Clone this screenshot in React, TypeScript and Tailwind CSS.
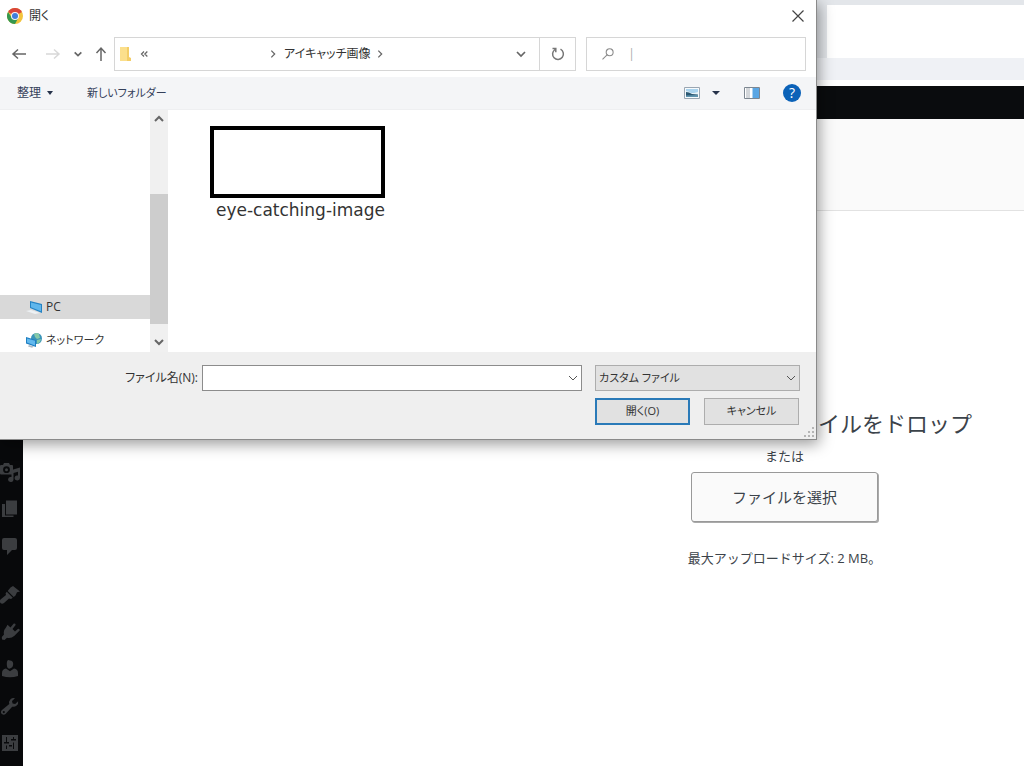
import type { ReactNode } from "react";

type IconProps = { children: ReactNode };

function MenuIcon({ children }: IconProps) {
  return (
    <svg viewBox="0 0 20 20" className="h-5 w-5" fill="currentColor" aria-hidden="true">
      {children}
    </svg>
  );
}

const contentMenu = [
  {
    label: "メディア",
    icon: (
      <MenuIcon>
        <path
          fillRule="evenodd"
          d="M1 3h2l1-2h5l1 2h2q1 0 1 1v7.500q0 1-1 1H1q-1 0-1-1V4q0-1 1-1zm5.500 1.300a3.400 3.400 0 1 0 0 6.800 3.400 3.400 0 0 0 0-6.800zm0 1.900a1.500 1.500 0 1 1 0 3 1.500 1.500 0 0 1 0-3z"
        />
        <path d="M11.500 8l8.500-2.500V16a2.700 2.500 0 1 1-2-2.400V9.800l-4.500 1.200v6.500a2.700 2.500 0 1 1-2-2.400z" />
      </MenuIcon>
    ),
  },
  {
    label: "固定ページ",
    icon: (
      <MenuIcon>
        <path d="M6 1.500h11v14H6z" />
        <path d="M2 5h3v11.500h8.500V18H2z" />
      </MenuIcon>
    ),
  },
  {
    label: "コメント",
    icon: (
      <MenuIcon>
        <path d="M4 2h11q2 0 2 2v8q0 2-2 2h-3l-5 5v-5H4q-2 0-2-2V4q0-2 2-2z" />
      </MenuIcon>
    ),
  },
];

const adminMenu = [
  {
    label: "外観",
    icon: (
      <MenuIcon>
        <path d="M10.500 2.500L13 1l7 5.500-3 .8-1.500 3.200-1.800 1.500-6-6zM6.800 6.800l6 6-1.800 1.200-2-.6-5 4.600q-2 1.500-3.500 0t0-3.500l5.500-4.500-.4-1.800z" />
      </MenuIcon>
    ),
  },
  {
    label: "プラグイン",
    icon: (
      <MenuIcon>
        <path d="M10.500 5.500l3-3.700q.9-.8 1.700 0t0 1.700L12.500 7l2.500 2.500 2.800-2.400q.9-.7 1.600.1t0 1.600L16.200 12l-1.700 1.700q-3.500 3-7.500 2L4.500 18 2 17.500 1.800 15 4 12.500Q3 8.500 6 5.500l1.500-2.700z" />
      </MenuIcon>
    ),
  },
  {
    label: "ユーザー",
    icon: (
      <MenuIcon>
        <path d="M10 1.500q3.200 0 3.200 3.500T10 9.500 6.800 5 10 1.500z" />
        <path d="M6 9.500l4 2.800 4-2.800q4 .8 4 4.500v3q-8 2.500-16 0v-3q0-3.700 4-4.500z" />
      </MenuIcon>
    ),
  },
  {
    label: "ツール",
    icon: (
      <MenuIcon>
        <path
          fillRule="evenodd"
          d="M16.700 9.500q-2 1.800-4.500 1.200L5.500 18q-1.700 1.500-3.600 0t-.2-3.700L9.300 8q-.8-2.500 1-4.500 2-2 4.700-1.300L12 5l.6 2.600 2.600.5 2.900-2.900q.6 2.600-1.400 4.300zM3.800 15a1.100 1.100 0 1 0 0 2.200 1.100 1.100 0 0 0 0-2.200z"
        />
      </MenuIcon>
    ),
  },
  {
    label: "設定",
    icon: (
      <MenuIcon>
        <path
          fillRule="evenodd"
          d="M2 2h16v16H2zM6 4v5H4v1.500h5V9H7V4zm0 8.500V16h1v-3.500zM13 4v2h-2v1.500h5V6h-2V4zm0 5.500V16h1V9.500zM9 12v1.500h3V12z"
        />
      </MenuIcon>
    ),
  },
];

function Chevron({ dir, className }: { dir: "up" | "down" | "right"; className: string }) {
  const d = { up: "M2 7l4-4 4 4", down: "M2 4l4 4 4-4", right: "M4 2l4 4-4 4" }[dir];
  return (
    <svg viewBox="0 0 12 12" className={className} fill="none" stroke="currentColor" aria-hidden="true">
      <path d={d} />
    </svg>
  );
}

function ChromeLogo() {
  return (
    <svg viewBox="0 0 16 16" className="h-4 w-4" aria-hidden="true">
      <circle cx="8" cy="8" r="8" fill="#f3c33c" />
      <path d="M8 8L1.070 4A8 8 0 0 1 14.930 4z" fill="#d9453a" />
      <path d="M1.070 4A8 8 0 0 0 8 16l3.300-6L8 8 4.800 9.700z" fill="#35984f" />
      <circle cx="8" cy="8" r="4" fill="#f4f4f4" />
      <circle cx="8" cy="8" r="3" fill="#3f7edb" />
    </svg>
  );
}

function Arrow({ dir, className }: { dir: "left" | "right" | "up"; className: string }) {
  const d = {
    left: "M15 8H2M7 3.500L2 8l5 4.500",
    right: "M1 8h13M9 3.500L14 8l-5 4.500",
    up: "M8 15V2M3.500 7L8 2l4.500 5",
  }[dir];
  return (
    <svg viewBox="0 0 16 16" className={className} fill="none" stroke="currentColor" strokeWidth="1.500" aria-hidden="true">
      <path d={d} />
    </svg>
  );
}

function FileDialog() {
  return (
    <div
      role="dialog"
      aria-label="開く"
      className="absolute top-0 left-0 right-[207px] flex flex-col border-r border-b border-[#8a8a8a] bg-white text-xs text-[#333] shadow-[2px_4px_14px_rgba(0,0,0,0.4)] [font-feature-settings:'palt']"
    >
      <header className="flex h-[31px] items-center gap-1.5 pr-2.5 pl-[7px]">
        <ChromeLogo />
        <h1 className="flex-1">開く</h1>
        <button aria-label="閉じる" className="flex h-4 w-4 items-center justify-center">
          <svg viewBox="0 0 12 12" className="h-3 w-3" stroke="#444" strokeWidth="1.200" aria-hidden="true">
            <path d="M.5 .5l11 11M11.500 .5l-11 11" />
          </svg>
        </button>
      </header>

      <div className="flex h-[46px] items-center pr-2.5 pl-[11px]">
        <nav aria-label="移動" className="flex w-[103px] items-center text-[#666]">
          <button aria-label="戻る">
            <Arrow dir="left" className="h-4 w-4" />
          </button>
          <button aria-label="進む" className="ml-[18px] text-[#d8d8d8]">
            <Arrow dir="right" className="h-4 w-4" />
          </button>
          <button aria-label="履歴" className="ml-3">
            <Chevron dir="down" className="h-2.5 w-2.5 stroke-2" />
          </button>
          <button aria-label="上へ" className="ml-2.5">
            <Arrow dir="up" className="h-4 w-4" />
          </button>
        </nav>
        <div className="flex h-[34px] flex-1 border border-[#d6d6d6]">
          <div className="flex flex-1 items-center pl-1">
            <svg viewBox="0 0 12 16" className="h-4 w-3" aria-hidden="true">
              <path d="M1 1h9v10l2 1v3H1z" fill="#f3cd67" />
              <path d="M1 1h7v14H1z" fill="#fbdf8c" />
            </svg>
            <button aria-label="前の階層" className="ml-2 text-[#666]">
              <svg viewBox="0 0 12 12" className="h-2.5 w-2.5" fill="none" stroke="currentColor" strokeWidth="1.500" aria-hidden="true">
                <path d="M6 3L3 6l3 3M10 3L7 6l3 3" />
              </svg>
            </button>
            <Chevron dir="right" className="ml-[119px] h-2.5 w-2.5 stroke-[1.5] text-[#666]" />
            <a href="#folder" className="ml-1.5">
              アイキャッチ画像
            </a>
            <Chevron dir="right" className="ml-1 h-2.5 w-2.5 stroke-[1.5] text-[#666]" />
            <button aria-label="以前の場所" className="mr-3 ml-auto text-[#666]">
              <Chevron dir="down" className="h-3 w-3 stroke-[1.7]" />
            </button>
          </div>
          <button aria-label="更新" className="flex w-9 items-center justify-center border-l border-[#d6d6d6] text-[#777]">
            <svg viewBox="0 0 14 14" className="h-3.5 w-3.5" fill="none" stroke="currentColor" strokeWidth="1.500" aria-hidden="true">
              <path d="M9.500 2.200A5.400 5.400 0 1 1 4 2.500M1.500 1.500h3.300v3.700" />
            </svg>
          </button>
        </div>
        <label className="ml-2.5 flex h-[34px] w-[220px] items-center border border-[#d6d6d6] pl-[15px]">
          <svg viewBox="0 0 14 14" className="h-3.5 w-3.5" fill="none" stroke="#8a8a8a" strokeWidth="1.200" aria-hidden="true">
            <circle cx="8.800" cy="5" r="4" />
            <path d="M5.800 8L.6 13.200" />
          </svg>
          <input type="search" aria-label="検索" placeholder="|" className="ml-3.5 w-full min-w-0 bg-transparent outline-none placeholder:text-[#aaa]" />
        </label>
      </div>

      <div className="flex h-[33px] items-center border-b border-[#eeeff1] bg-[#f4f5f7] pr-[15px] pl-[17px] text-[#34405a]">
        <button className="flex items-center gap-1.5">
          整理
          <svg viewBox="0 0 6 4" className="h-1 w-1.5" fill="#26324a" aria-hidden="true">
            <path d="M0 0h6L3 4z" />
          </svg>
        </button>
        <button className="ml-[34px] text-[11px]">新しいフォルダー</button>
        <div className="ml-auto flex items-center">
          <button aria-label="表示方法の変更" className="flex items-center gap-3">
            <svg viewBox="0 0 16 12" className="h-3 w-4" aria-hidden="true">
              <path d="M.5 .5h15v11H.5z" fill="#f6fafd" stroke="#9aa6b2" />
              <path d="M2 2h12v4H2z" fill="#a9d3ee" />
              <path d="M2 4q3 0 6 2.500L14 5v2H2z" fill="#e7f3f8" />
              <path d="M2 5q3 .2 6 2l6 .5V10H2z" fill="#2b5873" />
              <path d="M2 8.500l12-.6V10H2z" fill="#5f94ae" />
            </svg>
            <svg viewBox="0 0 8 4" className="h-1 w-2" fill="#26324a" aria-hidden="true">
              <path d="M0 0h8L4 4z" />
            </svg>
          </button>
          <button aria-label="プレビュー ウィンドウ" className="ml-6">
            <svg viewBox="0 0 16 12" className="h-3 w-4" aria-hidden="true">
              <path d="M.5 .5h15v11H.5z" fill="#fff" stroke="#7d8791" />
              <path d="M5 1v10M3 1v10" stroke="#a6adb5" />
              <path d="M8.500 1H15v10H8.500z" fill="#5aa6e4" />
            </svg>
          </button>
          <button
            aria-label="ヘルプ"
            className="ml-[23px] flex h-[18px] w-[18px] items-center justify-center rounded-full bg-[#0b62b8] text-sm leading-none text-white"
          >
            ?
          </button>
        </div>
      </div>

      <div className="flex h-[242px] bg-white">
        <ul className="flex w-[150px] flex-col justify-end gap-[9px]">
          <li className="flex h-6 items-center gap-1 bg-[#d9d9d9] pl-[26px]">
            <svg viewBox="0 0 16 16" className="h-4 w-4" aria-hidden="true">
              <path d="M0 12l5-1 9 3-5 1z" fill="#edf1f4" />
              <path d="M4 2l12 3v9L4 9z" fill="#2583c4" />
              <path d="M5 3.500l10 2.600v6.200L5 8.300z" fill="#5fb6ec" />
            </svg>
            PC
          </li>
          <li className="flex h-6 items-center gap-1 pl-[26px] text-[11px]">
            <svg viewBox="0 0 16 16" className="h-4 w-4" aria-hidden="true">
              <circle cx="10.500" cy="6.500" r="5.500" fill="#3a94b8" />
              <path d="M8 2q3-2 5 0l1 4-3 1-2-2zM11 8l4-1-1 3-3 2z" fill="#86c9a8" />
              <path d="M0 5l10 3v7L0 11.500z" fill="#1f7fc2" />
              <path d="M1 6.400l8 2.400v4.600L1 10.600z" fill="#62b9ee" />
              <path d="M3 13l5 1.500-2 1.300-4-1.300z" fill="#aebcc6" />
            </svg>
            ネットワーク
          </li>
        </ul>
        <div className="flex w-[18px] flex-col items-center bg-[#f0f0f0] text-[#666]">
          <button aria-label="上へスクロール" className="flex h-5 items-center">
            <Chevron dir="up" className="h-3 w-3 stroke-2" />
          </button>
          <div className="mt-16 h-[130px] w-full bg-[#cdcdcd]" />
          <button aria-label="下へスクロール" className="mt-auto flex h-5 items-center">
            <Chevron dir="down" className="h-3 w-3 stroke-2" />
          </button>
        </div>
        <div className="flex-1 pt-4 pl-[42px]">
          <button className="flex flex-col items-end">
            <span className="h-[72px] w-[175px] border-4 border-black bg-white" />
            <span className="font-['DejaVu_Sans',sans-serif] text-[17px] leading-6">eye-catching-image</span>
          </button>
        </div>
      </div>

      <footer className="relative bg-[#efefef] pt-[13px] pr-4 pb-3.5">
        <div className="flex h-[26px] items-center">
          <label htmlFor="file-name" className="w-[198px] text-right">
            ファイル名(N):
          </label>
          <div className="ml-1 flex h-full flex-1 items-center border border-[#8c8c8c] bg-white pr-0.5">
            <input id="file-name" type="text" className="h-full min-w-0 flex-1 px-1 outline-none" />
            <button aria-label="ファイル名の履歴" className="text-[#555]">
              <Chevron dir="down" className="h-3 w-3" />
            </button>
          </div>
          <div className="ml-[13px] grid h-full w-[205px] items-center">
            <select
              aria-label="ファイルの種類"
              className="col-start-1 row-start-1 h-full appearance-none border border-[#adadad] bg-[#e1e1e1] pl-[3px] text-[11px] outline-none"
            >
              <option>カスタム ファイル</option>
            </select>
            <Chevron dir="down" className="pointer-events-none col-start-1 row-start-1 mr-[3px] h-3 w-3 justify-self-end text-[#555]" />
          </div>
        </div>
        <div className="mt-[7px] flex h-[27px] justify-end gap-3.5 pr-px text-[11px]">
          <button className="w-[95px] border-2 border-[#2a7ab8] bg-[#e1e1e1]">開く(O)</button>
          <button className="w-[95px] border border-[#adadad] bg-[#e1e1e1]">キャンセル</button>
        </div>
        <svg viewBox="0 0 10 10" className="absolute right-0.5 bottom-0.5 h-2.5 w-2.5" fill="#b5b5b5" aria-hidden="true">
          <path d="M0 8h2v2H0zM4 8h2v2H4zM8 8h2v2H8zM4 4h2v2H4zM8 4h2v2H8zM8 0h2v2H8z" />
        </svg>
      </footer>
    </div>
  );
}

export default function App() {
  return (
    <div className="relative flex min-h-screen flex-col overflow-hidden bg-white font-['Open_Sans','Noto_Sans_CJK_JP',sans-serif] text-[#3c434a]">
      <div className="h-[86px] bg-white">
        <div className="h-20 bg-[#eff1f5]">
          <div className="flex h-[58px] bg-[#e3e6ea] pt-[5px] pl-[827px]">
            <div className="flex-1 bg-white" />
          </div>
        </div>
      </div>
      <div className="h-[33px] bg-[#0a0c0e]" />
      <div className="flex flex-1">
        <nav aria-label="管理メニュー" className="flex w-[23px] flex-col gap-3 bg-[#08090b] pt-[334px] text-[#3b3d40]">
          {[contentMenu, adminMenu].map((group, i) => (
            <ul key={i}>
              {group.map((item) => (
                <li key={item.label}>
                  <a href="#menu" aria-label={item.label} className="flex h-[37px] items-center">
                    {item.icon}
                  </a>
                </li>
              ))}
            </ul>
          ))}
        </nav>
        <main className="flex-1">
          <div className="h-[92px] border-b border-[#e2e2e2] bg-[#fafafa]" />
          <section className="flex flex-col items-center pt-[194px] pl-[522px] whitespace-nowrap">
            <h2 className="self-end pr-[52px] text-[22px] leading-9">イルをドロップ</h2>
            <p className="mt-px text-[13px] leading-7">または</p>
            <button className="mt-0.5 h-[50px] w-[187px] rounded-[3px] border border-[#999] bg-[#fafafa] text-[15px] shadow-[1px_1px_0_#aaa]">
              ファイルを選択
            </button>
            <p className="mt-6 text-[13px] leading-6">最大アップロードサイズ: 2 MB。</p>
          </section>
        </main>
      </div>
      <FileDialog />
    </div>
  );
}
